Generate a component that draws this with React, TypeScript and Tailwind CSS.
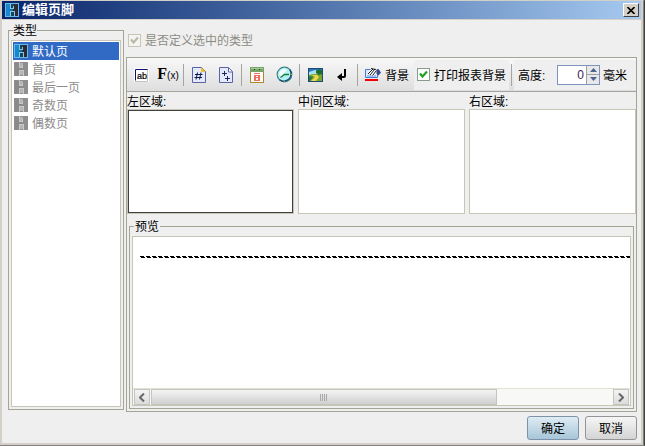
import React, { useState } from "react";

type LogoTone = "title" | "active" | "muted";

function Logo({ tone }: { tone: LogoTone }) {
  const muted = tone === "muted";
  const line = muted ? "#c8c8c8" : "#7cc8f0";
  return (
    <svg width="14" height="14" viewBox="0 0 14 14" shapeRendering="crispEdges" className="shrink-0" aria-hidden="true">
      <rect width="14" height="14" fill={muted ? "#8e8e8e" : "#2c2c2e"} />
      <path d="M1 1h4v12H1z" fill={muted ? "#8a8a8a" : "#1888cc"} />
      <path d="M5 6h3v2H5z" fill={muted ? "#8a8a8a" : "#146ca4"} />
      <path d="M5 0h1v5h2V3h1v3H5zM5 14V8h5v6H9V9H6v5z" fill={line} />
      <path d="M6 1h3v2H8v2H6zM6 9h3v4H6z" fill={muted ? "#b4b4b4" : "#1c4258"} />
      {!muted && <rect x="0.500" y="0.500" width="13" height="13" fill="none" stroke="#64b8e8" />}
    </svg>
  );
}

function TextFieldIcon() {
  return (
    <svg width="15" height="14" viewBox="0 0 15 14" aria-hidden="true">
      <rect width="15" height="14" fill="#fff" />
      <path d="M13.500 1v12.500H1" fill="none" stroke="#c8c4bc" />
      <path d="M1.500 12.500V1.500h12" fill="none" stroke="#101070" />
      <text x="3" y="11" fontSize="9" fontFamily="Liberation Sans, sans-serif" fill="#000" stroke="#000" strokeWidth="0.200">ab</text>
    </svg>
  );
}

function SheetIcon({ kind }: { kind: "number" | "total" }) {
  return (
    <svg width="14" height="16" viewBox="0 0 14 16" aria-hidden="true">
      <path d="M.5.5h9l4 4v11H.5z" fill="#e4e9fb" stroke="#5a64a4" />
      {kind === "number" ? (
        <>
          <path d="M9 1h1l3 3v1H9z" fill="#f2c02c" />
          <path d="M5.500 5.500l-1.500 7M9 5.500l-1.500 7M3 7.500h7.500M2.500 10.500H10" stroke="#10184c" fill="none" />
        </>
      ) : (
        <>
          <path d="M9.500 1v4H13" stroke="#5a64a4" fill="#fff" />
          <path d="M5.500 4v5M3 6.500h5M8.500 9v5M6 11.500h5" stroke="#1c2468" fill="none" />
        </>
      )}
    </svg>
  );
}

function CalendarIcon() {
  return (
    <svg width="14" height="16" viewBox="0 0 14 16" shapeRendering="crispEdges" aria-hidden="true">
      <rect x="0.500" y="0.500" width="13" height="15" fill="#fff" stroke="#b08828" />
      <rect width="14" height="5" fill="#78a468" />
      <path d="M1 1h12v1H1z" fill="#a8cc98" />
      <path d="M4 2h1v1H4zM9 2h1v1H9z" fill="#20401c" />
      <path d="M4 6h6v1H4zM4 8h6v6H4zM6 9v1h2V9zM6 11v2h2v-2z" fillRule="evenodd" fill="#f46c5c" />
    </svg>
  );
}

function ClockIcon() {
  return (
    <svg width="17" height="17" viewBox="0 0 17 17" aria-hidden="true">
      <circle cx="8.500" cy="8.500" r="7.300" fill="#b4f0f4" stroke="#38808c" strokeWidth="1.200" />
      <path d="M3 8a6 6 0 0 1 6-5l2 1-6 7z" fill="#fff" opacity=".8" />
      <path d="M3.500 13.700a7.300 7.300 0 0 0 10.200-10.200" fill="none" stroke="#184c70" strokeWidth="1.300" />
      <path d="M4.500 11.500l4-3h4.500" fill="none" stroke="#148030" strokeWidth="1.300" />
      <path d="M8 1h1v1H8zM8 15h1v1H8zM1 8h1v1H1zM15 8h1v1h-1z" fill="#c0a030" />
    </svg>
  );
}

function PictureIcon() {
  return (
    <svg width="15" height="14" viewBox="0 0 15 14" aria-hidden="true">
      <rect width="15" height="14" fill="#2878c0" />
      <path d="M1 4l6-2 7 2v3H1z" fill="#a8e0f4" />
      <path d="M1 7l5-1 8 0v7H1z" fill="#78a828" />
      <path d="M4 7h5l2 2-3 4H3l4-4z" fill="#f0d458" />
      <path d="M8 3c1-2 5-2 6 0v3l-3 1-3-2z" fill="#1c6c34" />
      <path d="M1 8l4 1-3 4H1z" fill="#287838" />
      <rect x="0.500" y="0.500" width="14" height="13" fill="none" stroke="#204878" />
    </svg>
  );
}

function ReturnIcon() {
  return (
    <svg width="10" height="12" viewBox="0 0 10 12" aria-hidden="true">
      <path d="M7 0h2v7q0 2-2 2H4V7h3z" fill="#000" />
      <path d="M0 8l5-4v8z" fill="#000" />
    </svg>
  );
}

function BackgroundIcon() {
  return (
    <svg width="16" height="16" viewBox="0 0 16 16" aria-hidden="true">
      <path d="M.5 2.500h12v8H.5z" fill="#dce8ff" stroke="#4878d0" />
      <path d="M2 9h9" stroke="#6c98e8" />
      <path d="M3 6l3-4 4-1 2 1 1 4-3 1-2 2z" fill="#fff" />
      <path d="M3 7l5-5M5 8l5-6M7.500 8.500l4-5M6 1.500l5 1" stroke="#181818" fill="none" />
      <path d="M11.500 2.500l2-.5 2.500 3.500-2.500 3-2-2z" fill="#3c4690" />
      <path d="M0 12h13v2H0z" fill="#f00000" />
    </svg>
  );
}

function CheckBox({ label, disabled = false }: { label: string; disabled?: boolean }) {
  const [on, setOn] = useState(true);
  return (
    <label className={disabled ? "flex items-center gap-1 text-[#8c8c84]" : "flex items-center gap-1"}>
      <span className="grid size-[13px] shrink-0">
        <input
          type="checkbox"
          checked={on}
          disabled={disabled}
          onChange={() => setOn(!on)}
          className="col-start-1 row-start-1 size-[13px] appearance-none border border-[#8a9a8c] bg-white disabled:border-[#c8c5b4] disabled:bg-[#f4f4f2]"
        />
        {on && (
          <svg viewBox="0 0 13 13" className="pointer-events-none col-start-1 row-start-1 size-[13px]" aria-hidden="true">
            <path d="M3 5.500l2.500 3L10 3.500" fill="none" stroke={disabled ? "#bcb9a6" : "#21a121"} strokeWidth="2.200" />
          </svg>
        )}
      </span>
      <span className="pt-[2px]">{label}</span>
    </label>
  );
}

function ToolButton({ title, children }: { title: string; children: React.ReactNode }) {
  return (
    <button type="button" aria-label={title} className="flex h-6 w-[26px] shrink-0 items-center justify-center">
      {children}
    </button>
  );
}

function Separator() {
  return <span className="mx-[2px] h-[22px] w-px shrink-0 bg-[#a5a5a0]" />;
}

function Area({ id, label }: { id: string; label: string }) {
  return (
    <div className="flex flex-1 flex-col">
      <label htmlFor={id} className="h-4 leading-[18px]">{label}</label>
      <textarea
        id={id}
        autoFocus={id === "left"}
        className="block h-[105px] w-full resize-none border border-[#c8c5b4] bg-white p-1 outline-none focus:caret-transparent focus:inset-ring focus:inset-ring-[#404040]"
      />
    </div>
  );
}

const pages = ["默认页", "首页", "最后一页", "奇数页", "偶数页"];

export default function App() {
  const [selected, setSelected] = useState(0);
  const [height, setHeight] = useState(0);

  return (
    <div className="flex h-screen flex-col border-r border-b border-r-[#404040] border-b-[#808080] bg-[#efefef] font-['Liberation_Sans','Noto_Sans_CJK_SC',sans-serif] text-xs text-black">
      <div className="flex min-h-0 flex-1 flex-col border-t border-r border-t-[#d4d0c8] border-r-[#808080]">
        <div className="flex min-h-0 flex-1 flex-col border-x-2 border-b-2 border-[#d4d0c8]">
          <header className="flex h-[18px] shrink-0 items-center gap-[3px] bg-linear-to-r from-[#0a246a] to-[#a6caf0] pr-[2px] pl-[3px]">
            <Logo tone="title" />
            <h1 className="flex-1 text-[13px] leading-[18px] font-bold text-white">编辑页脚</h1>
            <button type="button" aria-label="关闭" className="flex h-[14px] w-4 items-center justify-center border border-t-white border-r-[#404040] border-b-[#404040] border-l-white bg-[#d4d0c8]">
              <svg width="8" height="7" viewBox="0 0 8 7" aria-hidden="true">
                <path d="M.5 0l7 7M7.500 0l-7 7" stroke="#000" strokeWidth="1.600" />
              </svg>
            </button>
          </header>

          <main className="flex min-h-0 flex-1 gap-[2px] border-t border-[#d4d0c8] pr-1 pl-[6px]">
            <fieldset className="mt-[3px] mb-[2px] flex w-[116px] shrink-0 flex-col border border-[#a5a595] p-[2px]">
              <legend className="ml-[2px] pt-[2px] leading-[13px]">类型</legend>
              <ul className="h-full border border-[#c8c5b4] bg-white p-px">
                {pages.map((page, i) => (
                  <li key={page}>
                    <button
                      type="button"
                      onClick={() => setSelected(i)}
                      className={
                        i === selected
                          ? "flex h-[18px] w-full items-center gap-1 bg-[#316ac5] pl-px text-white"
                          : "flex h-[18px] w-full items-center gap-1 pl-px text-[#8c8c8c]"
                      }
                    >
                      <Logo tone={i === selected ? "active" : "muted"} />
                      <span className="pt-[2px]">{page}</span>
                    </button>
                  </li>
                ))}
              </ul>
            </fieldset>

            <div className="flex min-w-0 flex-1 flex-col">
              <div className="mt-3 mb-[9px] flex h-4 items-center pl-[2px]">
                <CheckBox label="是否定义选中的类型" disabled />
              </div>

              <section className="flex min-h-0 flex-1 flex-col border border-[#a5a595]">
                <div className="flex h-[34px] shrink-0 items-center border-b border-[#a5a5a0] bg-linear-to-b from-[#f8f8f8] to-[#dedede] pl-px whitespace-nowrap">
                  <div className="flex gap-px">
                    <ToolButton title="文本"><TextFieldIcon /></ToolButton>
                    <ToolButton title="公式">
                      <span className="font-['Liberation_Serif',serif] text-base leading-4 font-bold">F<span className="font-['Liberation_Sans',sans-serif] text-[10px] font-normal">(x)</span></span>
                    </ToolButton>
                  </div>
                  <Separator />
                  <div className="flex gap-px">
                    <ToolButton title="页码"><SheetIcon kind="number" /></ToolButton>
                    <ToolButton title="总页数"><SheetIcon kind="total" /></ToolButton>
                  </div>
                  <Separator />
                  <div className="flex gap-px">
                    <ToolButton title="日期"><CalendarIcon /></ToolButton>
                    <ToolButton title="时间"><ClockIcon /></ToolButton>
                  </div>
                  <Separator />
                  <div className="flex gap-px">
                    <ToolButton title="图片"><PictureIcon /></ToolButton>
                    <ToolButton title="换行"><ReturnIcon /></ToolButton>
                  </div>
                  <Separator />
                  <button type="button" className="flex h-6 items-center gap-1 px-[5px]">
                    <BackgroundIcon />
                    <span className="pt-[2px]">背景</span>
                  </button>
                  <div className="flex h-[30px] items-center bg-[#efefef] px-[3px]">
                    <CheckBox label="打印报表背景" />
                  </div>
                  <Separator />
                  <div className="flex h-[30px] flex-1 items-center bg-[#efefef] pl-1">
                    <label htmlFor="height" className="w-[39px] pt-[2px]">高度:</label>
                    <div className="flex h-5 w-[43px] border border-[#7b93bd]">
                      <input
                        id="height"
                        value={height}
                        onChange={(e) => setHeight(Number(e.target.value) || 0)}
                        className="w-7 bg-white pr-[2px] text-right text-[#3c1c50] outline-none"
                      />
                      <div className="flex flex-1 flex-col border-l border-[#a0a0a0]">
                        <button type="button" aria-label="增加" onClick={() => setHeight(height + 1)} className="flex flex-1 items-center justify-center border-b border-[#a0a0a0] bg-[#e8e8e8]">
                          <svg width="7" height="4" viewBox="0 0 7 4" aria-hidden="true"><path d="M0 4l3.500-4L7 4z" fill="#4a6690" /></svg>
                        </button>
                        <button type="button" aria-label="减少" onClick={() => setHeight(Math.max(0, height - 1))} className="flex flex-1 items-center justify-center bg-[#e8e8e8]">
                          <svg width="7" height="4" viewBox="0 0 7 4" aria-hidden="true"><path d="M0 0l3.500 4L7 0z" fill="#4a6690" /></svg>
                        </button>
                      </div>
                    </div>
                    <span className="ml-[3px] pt-[2px]">毫米</span>
                  </div>
                </div>

                <div className="mt-px flex gap-1">
                  <Area id="left" label="左区域:" />
                  <Area id="center" label="中间区域:" />
                  <Area id="right" label="右区域:" />
                </div>

                <fieldset className="mx-[2px] mt-[5px] mb-[2px] flex min-h-0 min-w-0 flex-1 flex-col border border-[#a5a595] p-[2px]">
                  <legend className="ml-[2px] px-px pt-[2px] leading-[13px]">预览</legend>
                  <div className="flex h-full flex-col border border-[#c8c5b4] bg-white">
                    <div className="flex-1 pt-[19px] pl-[7px]">
                      <svg width="100%" height="2" className="block" shapeRendering="crispEdges" aria-hidden="true">
                        <path d="M0 .5h2000" stroke="#000" strokeDasharray="4 2" />
                        <path d="M1 1.500h2000" stroke="#000" strokeDasharray="4 2" />
                      </svg>
                    </div>
                    <div className="flex h-[17px] shrink-0 border-t border-[#e4e1d0] bg-[#f8f8f6] px-px">
                      <button type="button" aria-label="向左滚动" className="flex w-4 items-center justify-center border border-[#c4c4c0] bg-linear-to-b from-[#f4f4f4] to-[#dcdcdc]">
                        <svg width="6" height="9" viewBox="0 0 6 9" aria-hidden="true"><path d="M5 .5l-4 4 4 4" fill="none" stroke="#686868" strokeWidth="2" /></svg>
                      </button>
                      <div className="flex flex-1 px-px">
                        <div className="flex w-3/4 items-center justify-center gap-px border border-[#c4c4c0] bg-linear-to-b from-[#f4f4f4] to-[#d0d0d0]">
                          {[0, 1, 2, 3].map((n) => (
                            <span key={n} className="h-[7px] w-px bg-[#a8a8a8]" />
                          ))}
                        </div>
                      </div>
                      <button type="button" aria-label="向右滚动" className="flex w-4 items-center justify-center border border-[#c4c4c0] bg-linear-to-b from-[#f4f4f4] to-[#dcdcdc]">
                        <svg width="6" height="9" viewBox="0 0 6 9" aria-hidden="true"><path d="M1 .5l4 4-4 4" fill="none" stroke="#686868" strokeWidth="2" /></svg>
                      </button>
                    </div>
                  </div>
                </fieldset>
              </section>
            </div>
          </main>

          <footer className="flex shrink-0 justify-end gap-[6px] pt-1 pr-1 pb-[3px]">
            <button type="button" className="h-6 w-[52px] rounded-[3px] border border-[#7f93a8] bg-linear-to-b from-[#dfecf4] to-[#a6c6d8] pt-[2px]">确定</button>
            <button type="button" className="h-6 w-[52px] rounded-[3px] border border-[#949494] bg-linear-to-b from-[#f6f6f6] to-[#d4d4d4] pt-[2px]">取消</button>
          </footer>
        </div>
      </div>
    </div>
  );
}
